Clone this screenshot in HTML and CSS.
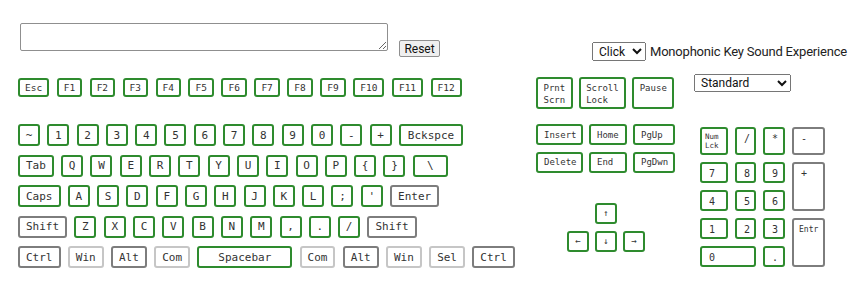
FILE: index.html
```html
<!DOCTYPE html>
<html lang="en">
<head>
    <meta charset="UTF-8">
    <meta name="viewport" content="width=device-width, initial-scale=1.0">
    <title>Keyboard Sound Tester</title>
    <link rel="stylesheet" href="styles.css">
</head>
<body>
    <div class="top">
        <textarea class="typed"></textarea>
        <button class="reset">Reset</button>
        <div class="sound">
            <select class="sound-select">
                <option>Click</option>
                <option>Beep</option>
            </select>
            <span class="sound-label">Monophonic Key Sound Experience</span>
        </div>
    </div>

    <div class="boards">
        <div class="main-board">
            <div class="frow">
                <div class="fkey">Esc</div>
                <div class="fkey">F1</div>
                <div class="fkey">F2</div>
                <div class="fkey">F3</div>
                <div class="fkey">F4</div>
                <div class="fkey">F5</div>
                <div class="fkey">F6</div>
                <div class="fkey">F7</div>
                <div class="fkey">F8</div>
                <div class="fkey">F9</div>
                <div class="fkey">F10</div>
                <div class="fkey">F11</div>
                <div class="fkey">F12</div>
            </div>

            <div class="rows">
                <div class="row">
                    <div class="key">~</div>
                    <div class="key">1</div>
                    <div class="key">2</div>
                    <div class="key">3</div>
                    <div class="key">4</div>
                    <div class="key">5</div>
                    <div class="key">6</div>
                    <div class="key">7</div>
                    <div class="key">8</div>
                    <div class="key">9</div>
                    <div class="key">0</div>
                    <div class="key">-</div>
                    <div class="key">+</div>
                    <div class="key wide bksp">Bckspce</div>
                </div>
                <div class="row">
                    <div class="key wide">Tab</div>
                    <div class="key">Q</div>
                    <div class="key">W</div>
                    <div class="key">E</div>
                    <div class="key">R</div>
                    <div class="key">T</div>
                    <div class="key">Y</div>
                    <div class="key">U</div>
                    <div class="key">I</div>
                    <div class="key">O</div>
                    <div class="key">P</div>
                    <div class="key">{</div>
                    <div class="key">}</div>
                    <div class="key backslash">\</div>
                </div>
                <div class="row">
                    <div class="key wide">Caps</div>
                    <div class="key">A</div>
                    <div class="key">S</div>
                    <div class="key">D</div>
                    <div class="key">F</div>
                    <div class="key">G</div>
                    <div class="key">H</div>
                    <div class="key">J</div>
                    <div class="key">K</div>
                    <div class="key">L</div>
                    <div class="key">;</div>
                    <div class="key">'</div>
                    <div class="key wide mod">Enter</div>
                </div>
                <div class="row">
                    <div class="key wide mod">Shift</div>
                    <div class="key">Z</div>
                    <div class="key">X</div>
                    <div class="key">C</div>
                    <div class="key">V</div>
                    <div class="key">B</div>
                    <div class="key">N</div>
                    <div class="key">M</div>
                    <div class="key">,</div>
                    <div class="key">.</div>
                    <div class="key">/</div>
                    <div class="key wide mod">Shift</div>
                </div>
                <div class="row">
                    <div class="key wide mod">Ctrl</div>
                    <div class="key wide off">Win</div>
                    <div class="key wide mod">Alt</div>
                    <div class="key wide off">Com</div>
                    <div class="key spacebar">Spacebar</div>
                    <div class="key wide off">Com</div>
                    <div class="key wide mod">Alt</div>
                    <div class="key wide off">Win</div>
                    <div class="key wide off">Sel</div>
                    <div class="key wide mod">Ctrl</div>
                </div>
            </div>
        </div>

        <div class="nav-board">
            <div class="sys">
                <div class="skey">Prnt<br>Scrn</div>
                <div class="skey">Scroll<br>Lock</div>
                <div class="skey">Pause</div>
            </div>
            <div class="edit">
                <div class="ekey">Insert</div>
                <div class="ekey">Home</div>
                <div class="ekey">PgUp</div>
                <div class="ekey">Delete</div>
                <div class="ekey">End</div>
                <div class="ekey">PgDwn</div>
            </div>
            <div class="arrows">
                <div class="akey up">&#8593;</div>
                <div class="akey left">&#8592;</div>
                <div class="akey down">&#8595;</div>
                <div class="akey right">&#8594;</div>
            </div>
        </div>

        <div class="num-board">
            <select class="layout-select">
                <option>Standard</option>
                <option>Compact</option>
            </select>
            <div class="numpad">
                <div class="nkey numlock">Num<br>Lck</div>
                <div class="nkey">/</div>
                <div class="nkey">*</div>
                <div class="nkey mod">-</div>
                <div class="nkey">7</div>
                <div class="nkey">8</div>
                <div class="nkey">9</div>
                <div class="nkey mod plus">+</div>
                <div class="nkey">4</div>
                <div class="nkey">5</div>
                <div class="nkey">6</div>
                <div class="nkey">1</div>
                <div class="nkey">2</div>
                <div class="nkey">3</div>
                <div class="nkey mod enter">Entr</div>
                <div class="nkey zero">0</div>
                <div class="nkey">.</div>
            </div>
        </div>
    </div>
</body>
</html>
```

FILE: styles.css
```css
body {
    margin: 0;
    background-color: #fff;
    color: #333;
    font-family: Roboto, "Liberation Sans", Arial, sans-serif;
}
.top {
    display: flex;
    align-items: flex-start;
    height: 74px;
    box-sizing: border-box;
    padding: 23px 0 0 20px;
    overflow: hidden;
}
.typed {
    flex-shrink: 0;
    width: 368px;
    height: 28px;
    box-sizing: border-box;
    margin: 0;
    border: 1px solid #8f8f8f;
    border-radius: 2px;
}
.reset {
    flex-shrink: 0;
    margin: 17px 0 0 11px;
    height: 17px;
    width: 41px;
    padding: 0;
    font-family: Roboto, "Liberation Sans", Arial, sans-serif;
    font-size: 12px;
    color: #111;
    background-color: #efefef;
    border: 1px solid #8f8f8f;
    border-radius: 2px;
}
.sound {
    display: flex;
    align-items: center;
    flex-shrink: 0;
    margin: 19px 0 0 152px;
}
.sound-select {
    width: 54px;
    height: 19px;
    margin: 0;
    padding: 0 0 0 2px;
    font-family: Roboto, "Liberation Sans", Arial, sans-serif;
    font-size: 12px;
    color: #111;
}
.sound-label {
    margin-left: 4px;
    font-size: 13px;
    letter-spacing: -0.2px;
    color: #222;
    white-space: nowrap;
}
.boards {
    display: flex;
    align-items: flex-start;
}
.main-board {
    width: 497px;
    padding-left: 18px;
}
.frow {
    display: flex;
    gap: 7.5px;
    margin-top: 4px;
}
.fkey, .key, .skey, .ekey, .akey, .nkey {
    box-sizing: border-box;
    border: 2px solid #2e8b2e;
    border-radius: 3px;
    background-color: #fff;
    color: #333;
    font-family: "DejaVu Sans Mono", "Liberation Mono", monospace;
}
.fkey {
    display: flex;
    align-items: center;
    justify-content: center;
    height: 19px;
    padding: 0 5px;
    font-size: 9.5px;
}
.rows {
    display: flex;
    flex-direction: column;
    gap: 8.5px;
    margin-top: 27px;
}
.row {
    display: flex;
    gap: 7.3px;
}
.key {
    display: flex;
    align-items: center;
    justify-content: center;
    height: 22px;
    width: 22px;
    font-size: 11px;
}
.key.wide {
    width: auto;
    padding: 0 6px;
}
.key.bksp {
    padding: 0 7px;
}
.key.backslash {
    width: 35px;
}
.key.spacebar {
    width: 95px;
}
.key.mod, .nkey.mod {
    border-color: #7d7d7d;
}
.key.off {
    border-color: #c6c6c6;
}
.nav-board {
    margin-left: 21px;
}
.sys {
    display: flex;
    gap: 6px;
    margin-top: 3px;
}
.skey {
    height: 32px;
    padding: 3px 5.5px 0;
    font-size: 9px;
    line-height: 12px;
}
.edit {
    display: grid;
    grid-template-columns: 47px 38px 42px;
    grid-auto-rows: 21px;
    gap: 6.5px 6px;
    margin-top: 15px;
}
.ekey {
    display: flex;
    align-items: center;
    padding: 0 6px;
    font-size: 9px;
}
.arrows {
    display: grid;
    grid-template-columns: repeat(3, 22px);
    grid-template-rows: 21px 21px;
    gap: 7px 6px;
    margin: 30px 0 0 31px;
}
.akey {
    display: flex;
    align-items: center;
    justify-content: center;
    font-size: 9px;
}
.akey.up {
    grid-area: 1 / 2;
}
.akey.left {
    grid-area: 2 / 1;
}
.akey.down {
    grid-area: 2 / 2;
}
.akey.right {
    grid-area: 2 / 3;
}
.num-board {
    margin-left: 19px;
}
.layout-select {
    display: block;
    width: 97px;
    height: 18px;
    margin: 0;
    padding: 0 0 0 2px;
    font-family: Roboto, "Liberation Sans", Arial, sans-serif;
    font-size: 12px;
    color: #111;
}
.numpad {
    display: grid;
    grid-template-columns: 28px 21px 22px 33px;
    grid-template-rows: 28px repeat(4, 21px);
    gap: 7px;
    margin: 35px 0 0 6px;
}
.nkey {
    padding: 3px 0 0 7px;
    font-size: 10px;
    line-height: 13px;
}
.nkey.numlock {
    padding: 3px 0 0 3px;
    font-size: 7.5px;
    line-height: 9px;
}
.nkey.plus {
    grid-column: 4;
    grid-row: 2 / span 2;
}
.nkey.enter {
    grid-column: 4;
    grid-row: 4 / span 2;
    padding-left: 5px;
    font-size: 8px;
}
.nkey.zero {
    grid-column: 1 / span 2;
}
```
